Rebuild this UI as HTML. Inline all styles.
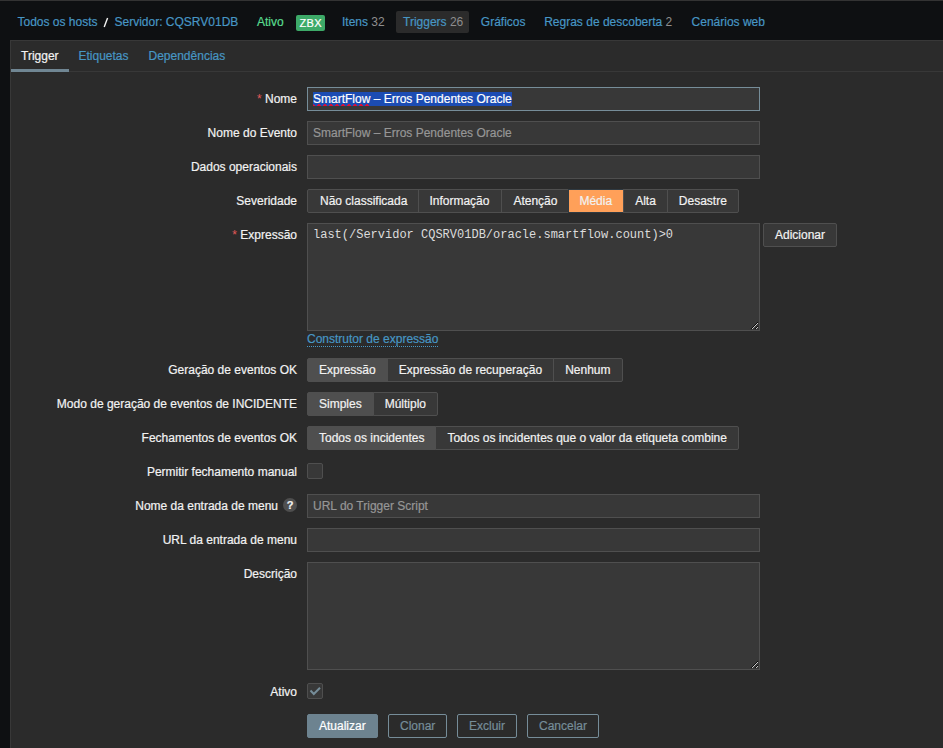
<!DOCTYPE html>
<html><head><meta charset="utf-8">
<style>
*{box-sizing:border-box}
html,body{margin:0;padding:0}
body{width:943px;height:748px;overflow:hidden;background:#0e1012;position:relative;font-family:"Liberation Sans",sans-serif;font-size:12px;color:#f2f2f2;-webkit-text-stroke-width:0.2px}
.a{position:absolute;white-space:nowrap}
.lnk{color:#4796c4}
.cnt{color:#8e8e8e;-webkit-text-stroke-width:0}
#topline{position:absolute;left:0;top:0;width:943px;height:1px;background:#333}
#panel{position:absolute;left:10px;top:40px;width:940px;height:720px;background:#2b2b2b;border:1px solid #383838}
#tabline{position:absolute;left:11px;top:71px;width:932px;height:1px;background:#383838}
#tabact{position:absolute;left:11px;top:69px;width:58px;height:3px;background:#708693}
.lbl{position:absolute;right:646px;line-height:24px;height:24px;text-align:right;white-space:nowrap}
.req{color:#e45959;-webkit-text-stroke-width:0}
.inp{position:absolute;left:307px;width:453px;height:24px;background:#383838;border:1px solid #4f4f4f;line-height:22px;padding:0 5px;white-space:nowrap}
.ph{color:#969696}
.rg{position:absolute;left:307px;height:24px;display:flex}
.rg span{display:block;height:24px;line-height:22px;padding:0 11px;border:1px solid #4f4f4f;background:#383838;margin-left:-1px;white-space:nowrap}
.rg span:first-child{margin-left:0;border-radius:2px 0 0 2px}
.rg span:last-child{border-radius:0 2px 2px 0}
.rg span.on{background:#4f4f4f}
.chk{position:absolute;left:307px;width:16px;height:16px;background:#383838;border:1px solid #4f4f4f;border-radius:2px}
.btn{position:absolute;height:24px;line-height:22px;padding:0 11px;border:1px solid #768d99;border-radius:2px;white-space:nowrap}
.ta{position:absolute;left:307px;width:453px;height:108px;background:#383838;border:1px solid #4f4f4f}
.grip{position:absolute;right:0;bottom:0}
</style></head><body>
<div id="topline"></div>
<!-- header nav -->
<div class="a lnk" style="left:17.5px;top:10px;line-height:24px">Todos os hosts</div>
<svg class="a" style="left:100px;top:14px" width="12" height="16"><line x1="4.2" y1="13" x2="7.6" y2="4" stroke="#f2f2f2" stroke-width="1.4"/></svg>
<div class="a lnk" style="left:114.5px;top:10px;line-height:24px">Servidor: CQSRV01DB</div>
<div class="a" style="left:257px;top:10px;line-height:24px;color:#59db8f">Ativo</div>
<div class="a" style="left:296px;top:15px;width:29px;height:16px;background:#3daa68;border-radius:2px;color:#fff;text-align:center;line-height:17px;font-size:11px;letter-spacing:0.4px;text-indent:0.4px">ZBX</div>
<div class="a lnk" style="left:342px;top:10px;line-height:24px">Itens <span class="cnt">32</span></div>
<div class="a" style="left:396px;top:11px;width:73px;height:22px;background:#2b2b2b;border-radius:2px"></div>
<div class="a lnk" style="left:403px;top:10px;line-height:24px">Triggers <span class="cnt">26</span></div>
<div class="a lnk" style="left:480.8px;top:10px;line-height:24px">Gráficos</div>
<div class="a lnk" style="left:544.2px;top:10px;line-height:24px">Regras de descoberta <span class="cnt">2</span></div>
<div class="a lnk" style="left:691.6px;top:10px;line-height:24px">Cenários web</div>

<div id="panel"></div>
<div id="tabline"></div>
<div id="tabact"></div>
<div class="a" style="left:21px;top:49px;line-height:14px">Trigger</div>
<div class="a lnk" style="left:78.5px;top:49px;line-height:14px">Etiquetas</div>
<div class="a lnk" style="left:148.5px;top:49px;line-height:14px">Dependências</div>

<!-- form -->
<div class="lbl" style="top:87px"><span class="req">*</span> Nome</div>
<div class="inp" style="top:87px;border-color:#768d99"><span style="background:#1c4cb3;color:#fff">SmartFlow – Erros Pendentes Oracle</span></div>
<svg class="a" style="left:313px;top:104px" width="58" height="2"><rect x="0" y="1" width="2" height="1" fill="#d8103a"/><rect x="0" y="0" width="1" height="1" fill="#d8103a" opacity="0.6"/><rect x="4" y="1" width="4" height="1" fill="#d8103a"/><rect x="5" y="0" width="2" height="1" fill="#d8103a"/><rect x="10" y="1" width="4" height="1" fill="#d8103a"/><rect x="11" y="0" width="2" height="1" fill="#d8103a"/><rect x="16" y="1" width="4" height="1" fill="#d8103a"/><rect x="17" y="0" width="2" height="1" fill="#d8103a"/><rect x="22" y="1" width="4" height="1" fill="#d8103a"/><rect x="23" y="0" width="2" height="1" fill="#d8103a"/><rect x="28" y="1" width="4" height="1" fill="#d8103a"/><rect x="29" y="0" width="2" height="1" fill="#d8103a"/><rect x="34" y="1" width="4" height="1" fill="#d8103a"/><rect x="35" y="0" width="2" height="1" fill="#d8103a"/><rect x="40" y="1" width="4" height="1" fill="#d8103a"/><rect x="41" y="0" width="2" height="1" fill="#d8103a"/><rect x="46" y="1" width="4" height="1" fill="#d8103a"/><rect x="47" y="0" width="2" height="1" fill="#d8103a"/><rect x="52" y="1" width="4" height="1" fill="#d8103a"/><rect x="53" y="0" width="2" height="1" fill="#d8103a"/></svg>

<div class="lbl" style="top:121px">Nome do Evento</div>
<div class="inp ph" style="top:121px">SmartFlow – Erros Pendentes Oracle</div>

<div class="lbl" style="top:155px">Dados operacionais</div>
<div class="inp" style="top:155px"></div>

<div class="lbl" style="top:189px">Severidade</div>
<div class="rg" style="top:189px">
<span style="padding-left:12px;padding-right:11px">Não classificada</span><span style="padding-left:10px;padding-right:12px">Informação</span><span>Atenção</span><span style="background:#ffa059;border-color:#2f3a42;padding-left:10px;padding-right:11px">Média</span><span>Alta</span><span>Desastre</span>
</div>

<div class="lbl" style="top:223px"><span class="req">*</span> Expressão</div>
<div class="ta" style="top:223px"></div>
<svg class="a" style="left:750px;top:320px" width="10" height="10"><rect x="7" y="2" width="1" height="1" fill="#0a0a0a"/><rect x="6" y="3" width="1" height="1" fill="#0a0a0a"/><rect x="5" y="4" width="1" height="1" fill="#0a0a0a"/><rect x="4" y="5" width="1" height="1" fill="#0a0a0a"/><rect x="3" y="6" width="1" height="1" fill="#0a0a0a"/><rect x="2" y="7" width="1" height="1" fill="#0a0a0a"/><rect x="1" y="8" width="1" height="1" fill="#0a0a0a"/><rect x="7" y="6" width="1" height="1" fill="#0a0a0a"/><rect x="6" y="7" width="1" height="1" fill="#0a0a0a"/><rect x="5" y="8" width="1" height="1" fill="#0a0a0a"/><rect x="7" y="3" width="1" height="1" fill="#c8c8c8"/><rect x="6" y="4" width="1" height="1" fill="#c8c8c8"/><rect x="5" y="5" width="1" height="1" fill="#c8c8c8"/><rect x="4" y="6" width="1" height="1" fill="#c8c8c8"/><rect x="3" y="7" width="1" height="1" fill="#c8c8c8"/><rect x="2" y="8" width="1" height="1" fill="#c8c8c8"/><rect x="7" y="7" width="1" height="1" fill="#c8c8c8"/><rect x="6" y="8" width="1" height="1" fill="#c8c8c8"/></svg>
<div class="a" style="left:313px;top:223px;line-height:24px;font-family:'Liberation Mono',monospace;font-size:12px;-webkit-text-stroke-width:0;color:#dcdcdc">last(/Servidor CQSRV01DB/oracle.smartflow.count)&gt;0</div>
<div class="btn" style="left:763px;top:223px;background:#383838;border-color:#4f4f4f">Adicionar</div>
<div class="a lnk" style="left:307px;top:327px;line-height:24px">Construtor de expressão</div>
<div class="a" style="left:307px;top:346px;width:132px;height:1px;background:repeating-linear-gradient(90deg,#4796c4 0 1px,transparent 1px 2px)"></div>

<div class="lbl" style="top:358px">Geração de eventos OK</div>
<div class="rg" style="top:358px"><span class="on">Expressão</span><span>Expressão de recuperação</span><span style="padding-right:12px">Nenhum</span></div>

<div class="lbl" style="top:392px">Modo de geração de eventos de INCIDENTE</div>
<div class="rg" style="top:392px"><span class="on">Simples</span><span>Múltiplo</span></div>

<div class="lbl" style="top:426px">Fechamentos de eventos OK</div>
<div class="rg" style="top:426px"><span class="on">Todos os incidentes</span><span>Todos os incidentes que o valor da etiqueta combine</span></div>

<div class="lbl" style="top:460px">Permitir fechamento manual</div>
<div class="chk" style="top:463px"></div>

<div class="lbl" style="top:494px;right:665px">Nome da entrada de menu</div>
<div class="a" style="left:283px;top:498px;width:14px;height:14px;border-radius:7px;background:#4f4f4f;color:#f2f2f2;font-weight:bold;font-size:11px;line-height:14px;text-align:center">?</div>
<div class="inp ph" style="top:494px">URL do Trigger Script</div>

<div class="lbl" style="top:528px">URL da entrada de menu</div>
<div class="inp" style="top:528px"></div>

<div class="lbl" style="top:562px">Descrição</div>
<div class="ta" style="top:562px"></div>
<svg class="a" style="left:750px;top:659px" width="10" height="10"><rect x="7" y="2" width="1" height="1" fill="#0a0a0a"/><rect x="6" y="3" width="1" height="1" fill="#0a0a0a"/><rect x="5" y="4" width="1" height="1" fill="#0a0a0a"/><rect x="4" y="5" width="1" height="1" fill="#0a0a0a"/><rect x="3" y="6" width="1" height="1" fill="#0a0a0a"/><rect x="2" y="7" width="1" height="1" fill="#0a0a0a"/><rect x="1" y="8" width="1" height="1" fill="#0a0a0a"/><rect x="7" y="6" width="1" height="1" fill="#0a0a0a"/><rect x="6" y="7" width="1" height="1" fill="#0a0a0a"/><rect x="5" y="8" width="1" height="1" fill="#0a0a0a"/><rect x="7" y="3" width="1" height="1" fill="#c8c8c8"/><rect x="6" y="4" width="1" height="1" fill="#c8c8c8"/><rect x="5" y="5" width="1" height="1" fill="#c8c8c8"/><rect x="4" y="6" width="1" height="1" fill="#c8c8c8"/><rect x="3" y="7" width="1" height="1" fill="#c8c8c8"/><rect x="2" y="8" width="1" height="1" fill="#c8c8c8"/><rect x="7" y="7" width="1" height="1" fill="#c8c8c8"/><rect x="6" y="8" width="1" height="1" fill="#c8c8c8"/></svg>

<div class="lbl" style="top:680px">Ativo</div>
<div class="chk" style="top:683px"></div>
<svg class="a" style="left:307px;top:683px" width="16" height="16"><polyline points="3.5,7.5 6.8,11 13,4.8" fill="none" stroke="#768d99" stroke-width="2"/></svg>

<div class="btn" style="left:307px;top:714px;background:#6d8390;border-color:#6d8390;color:#fff">Atualizar</div>
<div class="btn" style="left:388px;top:714px;color:#768d99">Clonar</div>
<div class="btn" style="left:457px;top:714px;color:#768d99">Excluir</div>
<div class="btn" style="left:527px;top:714px;color:#768d99">Cancelar</div>
</body></html>
